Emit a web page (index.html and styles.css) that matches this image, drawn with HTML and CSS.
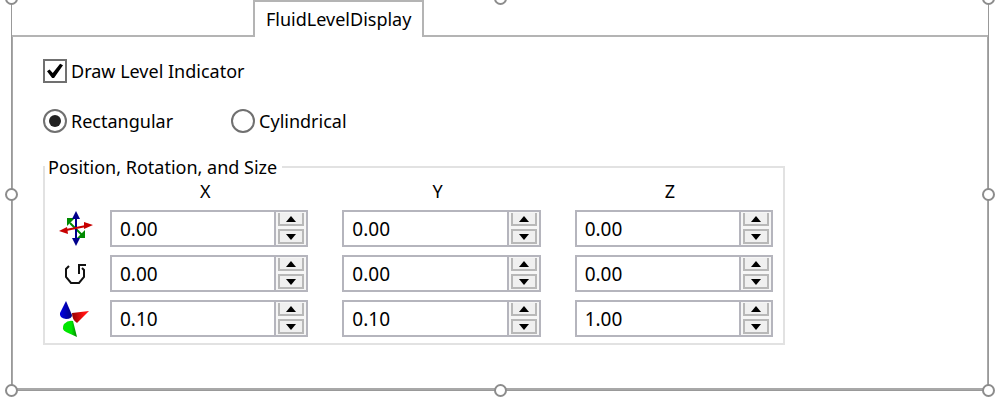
FILE: index.html
```html
<!DOCTYPE html>
<html lang="en">
<head>
<meta charset="utf-8">
<title>FluidLevelDisplay</title>
<link rel="stylesheet" href="styles.css">
</head>
<body>
<main class="selection">
  <div class="tabs" role="tablist">
    <span class="tab-space"></span>
    <button class="tab" type="button" role="tab" aria-selected="true">FluidLevelDisplay</button>
    <span class="tab-space tab-rest"></span>
  </div>
  <form class="panel">
    <label class="choice"><input class="check" type="checkbox" checked>Draw Level Indicator</label>
    <div class="shapes">
      <label class="choice"><input class="radio" type="radio" name="shape" checked>Rectangular</label>
      <label class="choice"><input class="radio" type="radio" name="shape">Cylindrical</label>
    </div>
    <fieldset class="group">
      <legend class="group-title">Position, Rotation, and Size</legend>
      <div class="grid">
        <span></span><span class="axis">X</span><span class="axis">Y</span><span class="axis">Z</span>

        <svg class="icon" viewBox="0 0 36 36" aria-label="Position">
          <g fill="#008a00" stroke="#008a00"><path d="M12 12L25 25" stroke-width="2"/><path d="M9 7h8l-8 8zM27 27h-8l8-8z" stroke="none"/></g>
          <g fill="#00008c" stroke="#00008c"><path d="M18 6V30" stroke-width="2"/><path d="M18 0l4 8h-8zM18 35l4-8h-8z" stroke="none"/></g>
          <g fill="#c80000" stroke="#c80000"><path d="M8 19L28 15" stroke-width="2"/><path d="M35 14l-9 4v-7zM1 20l8-4 1 7z" stroke="none"/></g>
        </svg>
        <div class="spin"><input class="value" aria-label="Position X" value="0.00"><div class="steps"><button class="step up" type="button" aria-label="Increase"></button><button class="step down" type="button" aria-label="Decrease"></button></div></div>
        <div class="spin"><input class="value" aria-label="Position Y" value="0.00"><div class="steps"><button class="step up" type="button" aria-label="Increase"></button><button class="step down" type="button" aria-label="Decrease"></button></div></div>
        <div class="spin"><input class="value" aria-label="Position Z" value="0.00"><div class="steps"><button class="step up" type="button" aria-label="Increase"></button><button class="step down" type="button" aria-label="Decrease"></button></div></div>

        <svg class="icon" viewBox="0 0 36 36" aria-label="Rotation">
          <path d="M11 10L8 13V21L13 27H21L26 21V14L24 12M21 18V9H28" fill="none" stroke="#111" stroke-width="2"/>
        </svg>
        <div class="spin"><input class="value" aria-label="Rotation X" value="0.00"><div class="steps"><button class="step up" type="button" aria-label="Increase"></button><button class="step down" type="button" aria-label="Decrease"></button></div></div>
        <div class="spin"><input class="value" aria-label="Rotation Y" value="0.00"><div class="steps"><button class="step up" type="button" aria-label="Increase"></button><button class="step down" type="button" aria-label="Decrease"></button></div></div>
        <div class="spin"><input class="value" aria-label="Rotation Z" value="0.00"><div class="steps"><button class="step up" type="button" aria-label="Increase"></button><button class="step down" type="button" aria-label="Decrease"></button></div></div>

        <svg class="icon" viewBox="0 0 36 36" aria-label="Size">
          <defs>
            <linearGradient id="blue"><stop offset="0" stop-color="#0000e6"/><stop offset="1" stop-color="#000080"/></linearGradient>
            <linearGradient id="red"><stop offset="0" stop-color="#900000"/><stop offset=".7" stop-color="#ff1010"/></linearGradient>
            <linearGradient id="green"><stop offset="0" stop-color="#00e600"/><stop offset=".6" stop-color="#00e600"/><stop offset="1" stop-color="#008000"/></linearGradient>
          </defs>
          <path d="M14 12L31 10L19 22Q14 19 14 12z" fill="url(#red)"/>
          <path d="M8 0L2 12Q1 17 8 18Q14 18 14 14z" fill="url(#blue)"/>
          <path d="M15 20L19 36L8 31Q3 28 6 23Q10 19 15 20z" fill="url(#green)"/>
        </svg>
        <div class="spin"><input class="value" aria-label="Size X" value="0.10"><div class="steps"><button class="step up" type="button" aria-label="Increase"></button><button class="step down" type="button" aria-label="Decrease"></button></div></div>
        <div class="spin"><input class="value" aria-label="Size Y" value="0.10"><div class="steps"><button class="step up" type="button" aria-label="Increase"></button><button class="step down" type="button" aria-label="Decrease"></button></div></div>
        <div class="spin"><input class="value" aria-label="Size Z" value="1.00"><div class="steps"><button class="step up" type="button" aria-label="Increase"></button><button class="step down" type="button" aria-label="Decrease"></button></div></div>
      </div>
    </fieldset>
  </form>
  <i class="handle top left"></i><i class="handle top center"></i><i class="handle top right"></i>
  <i class="handle middle left"></i><i class="handle middle right"></i>
  <i class="handle bottom left"></i><i class="handle bottom center"></i><i class="handle bottom right"></i>
</main>
</body>
</html>
```

FILE: styles.css
```css
* { box-sizing: border-box; }

body {
  min-height: 100vh;
  margin: 0;
  background: #fff;
  color: #000;
  font: 18px/24px "Noto Sans", "Open Sans", sans-serif;
}

button, input { font: inherit; color: inherit; }

.selection {
  position: relative;
  margin: 0 11px;
  border: 1px solid #999;
  border-top: 0;
}

.tabs { display: flex; height: 37px; }

.tab-space {
  flex: 0 0 241px;
  border-bottom: 2px solid #b4b4b4;
}

.tab-rest { flex: 1; }

.tab {
  padding: 0 11px 2px;
  border: 2px solid #b4b4b4;
  border-bottom: 0;
  background: #fff;
  white-space: nowrap;
}

.panel {
  padding: 22px 30px 43px;
  border: 1px solid #a8a8a8;
  border-top: 0;
  border-bottom-width: 2px;
}

.choice {
  display: flex;
  align-items: center;
  gap: 4px;
}

.shapes {
  display: flex;
  gap: 58px;
  margin: 26px 0 22px;
}

.check, .radio {
  appearance: none;
  display: grid;
  place-items: center;
  width: 24px;
  height: 24px;
  margin: 0;
  border: 2px solid #707070;
  background: #fff;
}

.radio { border-radius: 50%; }

.radio:checked::after {
  content: "";
  width: 12px;
  height: 12px;
  border-radius: 50%;
  background: #222;
}

.check:checked::after {
  content: "";
  width: 16px;
  height: 16px;
  background: #000;
  clip-path: polygon(0 52%, 16% 40%, 36% 62%, 82% 4%, 100% 14%, 44% 94%, 32% 94%);
}

.group {
  max-width: 742px;
  min-width: 0;
  margin: 0;
  padding: 0 10px 6px 13px;
  border: 2px solid #e2e2e2;
}

.group-title {
  margin-left: -13px;
  padding: 0 5px 0 3px;
}

.grid {
  display: grid;
  grid-template-columns: 18px repeat(3, minmax(0, 1fr));
  grid-template-rows: 23px repeat(3, 37px);
  gap: 8px 34px;
  align-items: center;
}

.axis { padding-right: 8px; text-align: center; }

.icon { width: 36px; height: 36px; }

.spin {
  display: flex;
  height: 37px;
  border: 2px solid #b5b5bd;
}

.value {
  flex: 1;
  min-width: 0;
  padding: 0 8px;
  border: 0;
  background: #fff;
  font-size: 19px;
}

.steps {
  display: flex;
  flex-direction: column;
  gap: 3px;
  width: 32px;
  padding: 1px 2px;
  border-left: 2px solid #b5b5bd;
  background: #f6f6f6;
}

.step {
  display: grid;
  place-items: center;
  flex: 1;
  padding: 0;
  border: 2px solid #b8b8b8;
  background: #f0f0f0;
}

.up { border-top: 0; }

.step::after {
  content: "";
  border: 5px solid transparent;
  border-top: 0;
  border-bottom: 6px solid #000;
}

.down::after {
  border-top: 6px solid #000;
  border-bottom: 0;
}

.handle {
  position: absolute;
  width: 13px;
  height: 13px;
  border: 2px solid #8c8c8c;
  border-radius: 50%;
  background: #fff;
}

.top { top: -8px; }
.middle { top: calc(50% - 7px); }
.bottom { bottom: -7px; }
.left { left: -7px; }
.center { left: calc(50% - 6px); }
.right { right: -7px; }
```
